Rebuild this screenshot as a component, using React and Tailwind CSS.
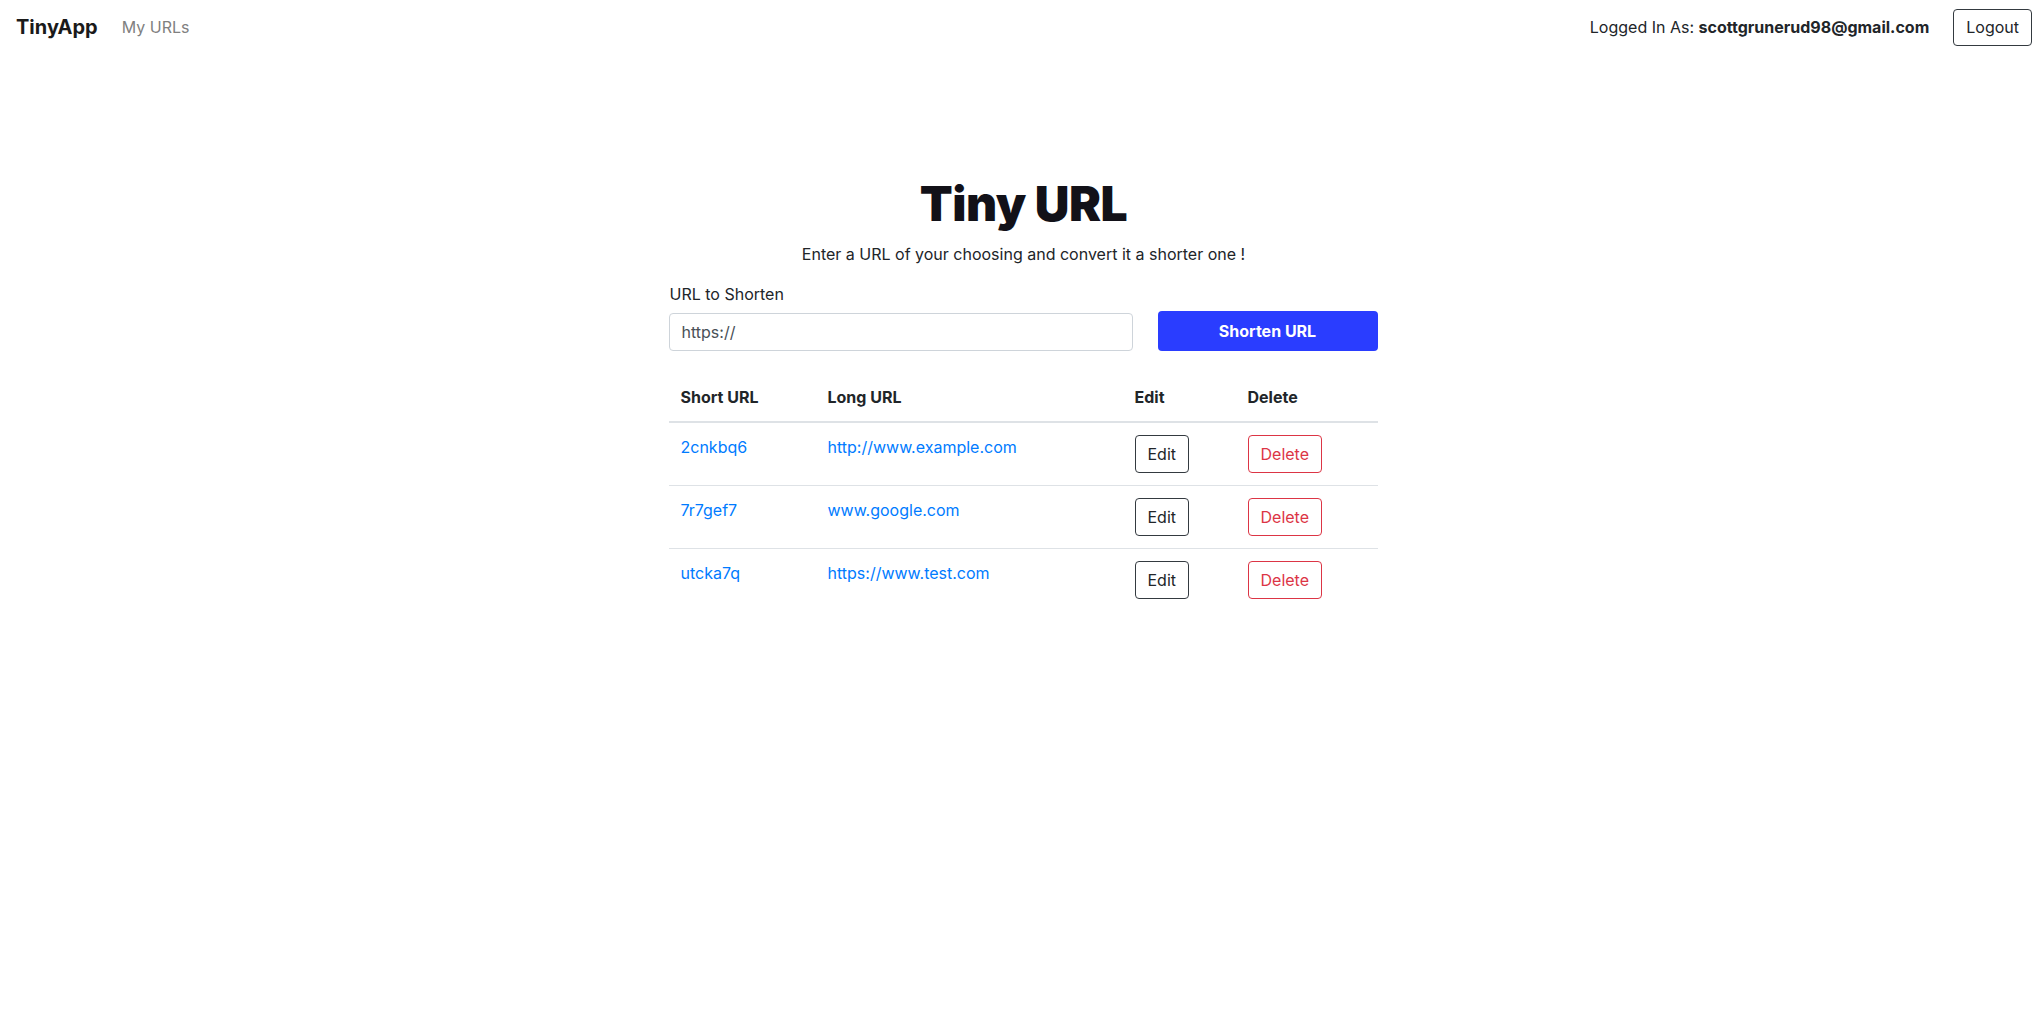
const urls = [
  { short: '2cnkbq6', long: 'http://www.example.com' },
  { short: '7r7gef7', long: 'www.google.com' },
  { short: 'utcka7q', long: 'https://www.test.com' },
];

function Navbar() {
  return (
    <nav className="flex items-center justify-between pl-4 pr-3 h-[54px]">
      <div className="flex items-center">
        <a href="#" className="text-[20px] font-bold text-[#1a1a1a] mr-4 leading-none">
          TinyApp
        </a>
        <a href="#" className="px-2 text-[16px] text-[#808080]">
          My URLs
        </a>
      </div>
      <div className="flex items-center gap-6">
        <span className="text-[16px] text-[#212529]">
          Logged In As: <b className="font-bold">scottgrunerud98@gmail.com</b>
        </span>
        <button className="h-[37px] px-3 border border-[#343a40] rounded text-[16px] text-[#212529]">
          Logout
        </button>
      </div>
    </nav>
  );
}

export default function App() {
  return (
    <div className="min-h-screen bg-white text-[#212529]" style={{ fontFamily: 'Inter, "Noto Sans", sans-serif' }}>
      <Navbar />
      <main className="w-[713px] pl-[3px] mx-auto pt-[119px]">
        <h1 className="text-center text-[48px] leading-[61px] font-black text-[#121118] tracking-[-0.01em] mb-2">
          Tiny URL
        </h1>
        <p className="text-center text-[16px] leading-6 mb-4">
          Enter a URL of your choosing and convert it a shorter one !
        </p>
        <form className="flex flex-col" onSubmit={(e) => e.preventDefault()}>
          <label className="text-[16px] leading-6 mb-[5px] pl-px">URL to Shorten</label>
          <div className="flex items-end gap-[25px]">
            <input
              type="text"
              defaultValue="https://"
              className="w-[464px] h-[38px] px-3 border border-[#ced4da] rounded text-[16px] text-[#495057] outline-none"
            />
            <button className="w-[220px] h-[40px] bg-[#2a3dff] rounded text-white font-bold text-[16px]">
              Shorten URL
            </button>
          </div>
        </form>
        <table className="w-[709px] mt-[22px] text-[16px] leading-6 border-collapse">
          <colgroup>
            <col className="w-[147px]" />
            <col className="w-[307px]" />
            <col className="w-[113px]" />
            <col className="w-[142px]" />
          </colgroup>
          <thead>
            <tr className="border-b-2 border-[#dee2e6]">
              <th className="text-left font-bold p-3">Short URL</th>
              <th className="text-left font-bold p-3">Long URL</th>
              <th className="text-left font-bold p-3">Edit</th>
              <th className="text-left font-bold p-3">Delete</th>
            </tr>
          </thead>
          <tbody>
            {urls.map((u, i) => (
              <tr key={u.short} className={i > 0 ? 'border-t border-[#dee2e6]' : ''}>
                <td className="p-3 align-top">
                  <a href="#" className="text-[#007bff]">{u.short}</a>
                </td>
                <td className="p-3 align-top">
                  <a href="#" className="text-[#007bff]">{u.long}</a>
                </td>
                <td className="p-3 align-top">
                  <button className="h-[38px] px-3 border border-[#343a40] rounded text-[#212529]">Edit</button>
                </td>
                <td className="p-3 align-top">
                  <button className="h-[38px] px-3 border border-[#dc3545] rounded text-[#dc3545]">Delete</button>
                </td>
              </tr>
            ))}
          </tbody>
        </table>
      </main>
    </div>
  );
}
